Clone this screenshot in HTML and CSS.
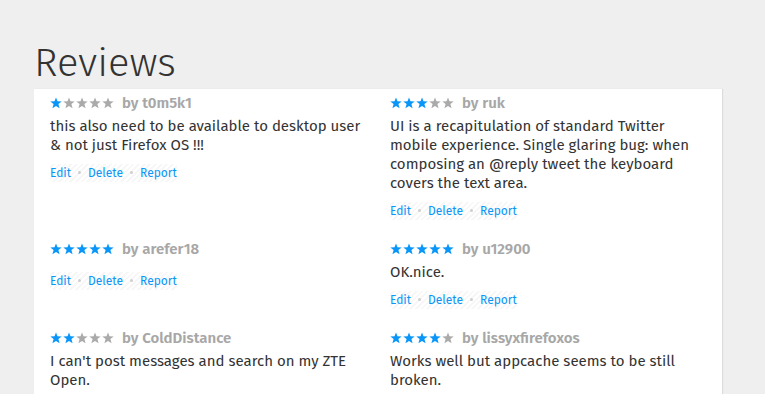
FILE: index.html
```html
<!DOCTYPE html>
<html>
<head>
<meta charset="utf-8">
<link rel="stylesheet" href="styles.css">
</head>
<body>
<svg width="0" height="0" class="defs">
  <defs>
    <path id="star" d="M6 0.4 L7.5 4.3 L11.7 4.5 L8.4 7.1 L9.6 11.2 L6 8.9 L2.4 11.2 L3.6 7.1 L0.3 4.5 L4.5 4.3 Z"/>
  </defs>
</svg>
<h1 class="title">Reviews</h1>
<section class="panel">
  <ul class="reviews">
    <li class="review">
      <div class="head"><span class="stars"><svg viewBox="0 0 12 12" class="on"><use href="#star"/></svg><svg viewBox="0 0 12 12"><use href="#star"/></svg><svg viewBox="0 0 12 12"><use href="#star"/></svg><svg viewBox="0 0 12 12"><use href="#star"/></svg><svg viewBox="0 0 12 12"><use href="#star"/></svg></span><span class="by">by t0m5k1</span></div>
      <p class="body">this also need to be available to desktop user &amp; not just Firefox OS !!!</p>
      <div class="actions"><a>Edit</a><span class="dot"></span><a>Delete</a><span class="dot"></span><a>Report</a></div>
    </li>
    <li class="review">
      <div class="head"><span class="stars"><svg viewBox="0 0 12 12" class="on"><use href="#star"/></svg><svg viewBox="0 0 12 12" class="on"><use href="#star"/></svg><svg viewBox="0 0 12 12" class="on"><use href="#star"/></svg><svg viewBox="0 0 12 12"><use href="#star"/></svg><svg viewBox="0 0 12 12"><use href="#star"/></svg></span><span class="by">by ruk</span></div>
      <p class="body">UI is a recapitulation of standard Twitter mobile experience. Single glaring bug: when composing an @reply tweet the keyboard covers the text area.</p>
      <div class="actions"><a>Edit</a><span class="dot"></span><a>Delete</a><span class="dot"></span><a>Report</a></div>
    </li>
    <li class="review">
      <div class="head"><span class="stars"><svg viewBox="0 0 12 12" class="on"><use href="#star"/></svg><svg viewBox="0 0 12 12" class="on"><use href="#star"/></svg><svg viewBox="0 0 12 12" class="on"><use href="#star"/></svg><svg viewBox="0 0 12 12" class="on"><use href="#star"/></svg><svg viewBox="0 0 12 12" class="on"><use href="#star"/></svg></span><span class="by">by arefer18</span></div>
      <p class="body"></p>
      <div class="actions"><a>Edit</a><span class="dot"></span><a>Delete</a><span class="dot"></span><a>Report</a></div>
    </li>
    <li class="review">
      <div class="head"><span class="stars"><svg viewBox="0 0 12 12" class="on"><use href="#star"/></svg><svg viewBox="0 0 12 12" class="on"><use href="#star"/></svg><svg viewBox="0 0 12 12" class="on"><use href="#star"/></svg><svg viewBox="0 0 12 12" class="on"><use href="#star"/></svg><svg viewBox="0 0 12 12" class="on"><use href="#star"/></svg></span><span class="by">by u12900</span></div>
      <p class="body">OK.nice.</p>
      <div class="actions"><a>Edit</a><span class="dot"></span><a>Delete</a><span class="dot"></span><a>Report</a></div>
    </li>
    <li class="review">
      <div class="head"><span class="stars"><svg viewBox="0 0 12 12" class="on"><use href="#star"/></svg><svg viewBox="0 0 12 12" class="on"><use href="#star"/></svg><svg viewBox="0 0 12 12"><use href="#star"/></svg><svg viewBox="0 0 12 12"><use href="#star"/></svg><svg viewBox="0 0 12 12"><use href="#star"/></svg></span><span class="by">by ColdDistance</span></div>
      <p class="body">I can't post messages and search on my ZTE Open.</p>
      <div class="actions"><a>Edit</a><span class="dot"></span><a>Delete</a><span class="dot"></span><a>Report</a></div>
    </li>
    <li class="review">
      <div class="head"><span class="stars"><svg viewBox="0 0 12 12" class="on"><use href="#star"/></svg><svg viewBox="0 0 12 12" class="on"><use href="#star"/></svg><svg viewBox="0 0 12 12" class="on"><use href="#star"/></svg><svg viewBox="0 0 12 12" class="on"><use href="#star"/></svg><svg viewBox="0 0 12 12"><use href="#star"/></svg></span><span class="by">by lissyxfirefoxos</span></div>
      <p class="body">Works well but appcache seems to be still broken.</p>
      <div class="actions"><a>Edit</a><span class="dot"></span><a>Delete</a><span class="dot"></span><a>Report</a></div>
    </li>
  </ul>
</section>
</body>
</html>
```
FILE: styles.css
```css
html, body {
  margin: 0;
  padding: 0;
  background: #efefef;
  font-family: "Fira Sans", "Open Sans", "Noto Sans", sans-serif;
  color: #333;
  overflow: hidden;
  height: 394px;
}
.defs { position: absolute; }
.title {
  margin: 0;
  padding: 38px 0 0 34px;
  font-size: 40px;
  line-height: 51px;
  font-weight: 300;
  color: #333;
}
.panel {
  margin-left: 34px;
  width: 688px;
  background: #fff;
  box-shadow: 1px 0 1px rgba(0,0,0,0.08);
  padding: 4px 0 0 16px;
  box-sizing: border-box;
  height: 305px;
  overflow: hidden;
}
.reviews {
  list-style: none;
  margin: 0;
  padding: 0;
  display: grid;
  grid-template-columns: 340px 1fr;
  row-gap: 19px;
  align-items: start;
}
.review { display: flex; flex-direction: column; align-items: flex-start; }
.head {
  display: flex;
  align-items: center;
  height: 20px;
}
.stars {
  display: flex;
  gap: 1px;
}
.stars svg {
  width: 12px;
  height: 12px;
  fill: #aaaaaa;
}
.stars svg.on { fill: #0996f8; }
.by {
  margin-left: 8px;
  font-size: 15px;
  font-weight: 600;
  color: #a7a7a7;
}
.body {
  margin: 4px 0 0;
  font-size: 15px;
  line-height: 19px;
  padding-right: 16px;
}
.actions {
  margin-top: 9px;
  display: inline-flex;
  align-items: center;
  font-size: 12px;
  line-height: 18px;
  background: repeating-linear-gradient(135deg, #fff 0 2px, #f7f7f7 2px 4px);
}
.actions a { color: #0996f8; }
.dot {
  width: 3px;
  height: 3px;
  border-radius: 50%;
  background: #cfcfcf;
  margin: -2px 7px 0 7px;
}
```
